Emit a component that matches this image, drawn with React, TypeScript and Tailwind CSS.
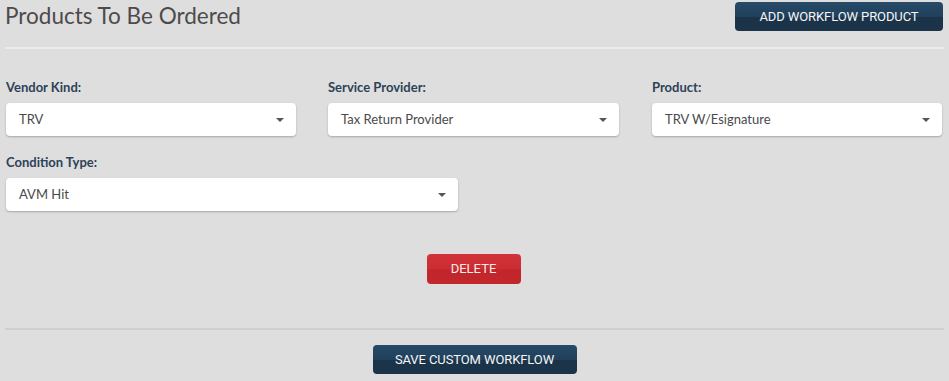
import React from "react";

function Select({ value, className }: { value: string; className: string }) {
  return (
    <div
      className={`relative flex h-[33px] items-center rounded-[4px] bg-white pl-[13px] text-[13px] text-[#4a4a4a] shadow-[0_1px_2px_rgba(0,0,0,0.25)] ${className}`}
    >
      <span>{value}</span>
      <span className="absolute right-[12px] top-[15px] h-0 w-0 border-x-[4px] border-t-[4px] border-x-transparent border-t-[#555]" />
    </div>
  );
}

function Field({ label, value, className }: { label: string; value: string; className: string }) {
  return (
    <div className="flex flex-col">
      <div className="mb-[8px] h-[16px] text-[13px] font-bold leading-[16px] text-[#2d4256]">{label}</div>
      <Select value={value} className={className} />
    </div>
  );
}

function NavyButton({ children, className }: { children: React.ReactNode; className: string }) {
  return (
    <div
      className={`flex h-[29px] items-center justify-center rounded-[4px] bg-[linear-gradient(#264a68_0%,#21405b_50%,#1a3349_52%,#1b344a_100%)] font-['Roboto',sans-serif] text-[13px] tracking-[-0.1px] text-[#f4f6f8] ${className}`}
    >
      {children}
    </div>
  );
}

export default function App() {
  return (
    <div
      className="h-[381px] w-[949px] overflow-hidden bg-[#dedede]"
      style={{ fontFamily: "Lato, 'Open Sans', sans-serif" }}
    >
      <div className="flex items-start justify-between pl-[5px] pr-[6px] pt-[2px]">
        <div className="pt-[1px] text-[22.5px] leading-[26px] text-[#4d4a4c]">Products To Be Ordered</div>
        <NavyButton className="w-[208px]">ADD WORKFLOW PRODUCT</NavyButton>
      </div>
      <div className="ml-[5px] mr-[5px] mt-[16px] h-[2px] bg-[#ececec]" />
      <div className="grid grid-cols-[322px_324px_1fr] pl-[6px] pr-[7px] pt-[30px]">
        <Field label="Vendor Kind:" value="TRV" className="w-[290px]" />
        <Field label="Service Provider:" value="Tax Return Provider" className="w-[291px]" />
        <Field label="Product:" value="TRV W/Esignature" className="w-[290px]" />
      </div>
      <div className="pl-[6px] pt-[18px]">
        <Field label="Condition Type:" value="AVM Hit" className="w-[452px]" />
      </div>
      <div className="flex justify-center pt-[43px]">
        <div className="mr-[2px] flex h-[30px] w-[94px] items-center justify-center rounded-[4px] bg-[linear-gradient(#d03338_0%,#cc2d32_50%,#c0262b_52%,#c2272c_100%)] font-['Roboto',sans-serif] text-[13px] text-[#fbeeee]">
          DELETE
        </div>
      </div>
      <div className="ml-[5px] mr-[5px] mt-[44px] h-[2px] bg-[#cfcfcf]" />
      <div className="flex justify-center pt-[15px]">
        <NavyButton className="w-[204px]">SAVE CUSTOM WORKFLOW</NavyButton>
      </div>
    </div>
  );
}
